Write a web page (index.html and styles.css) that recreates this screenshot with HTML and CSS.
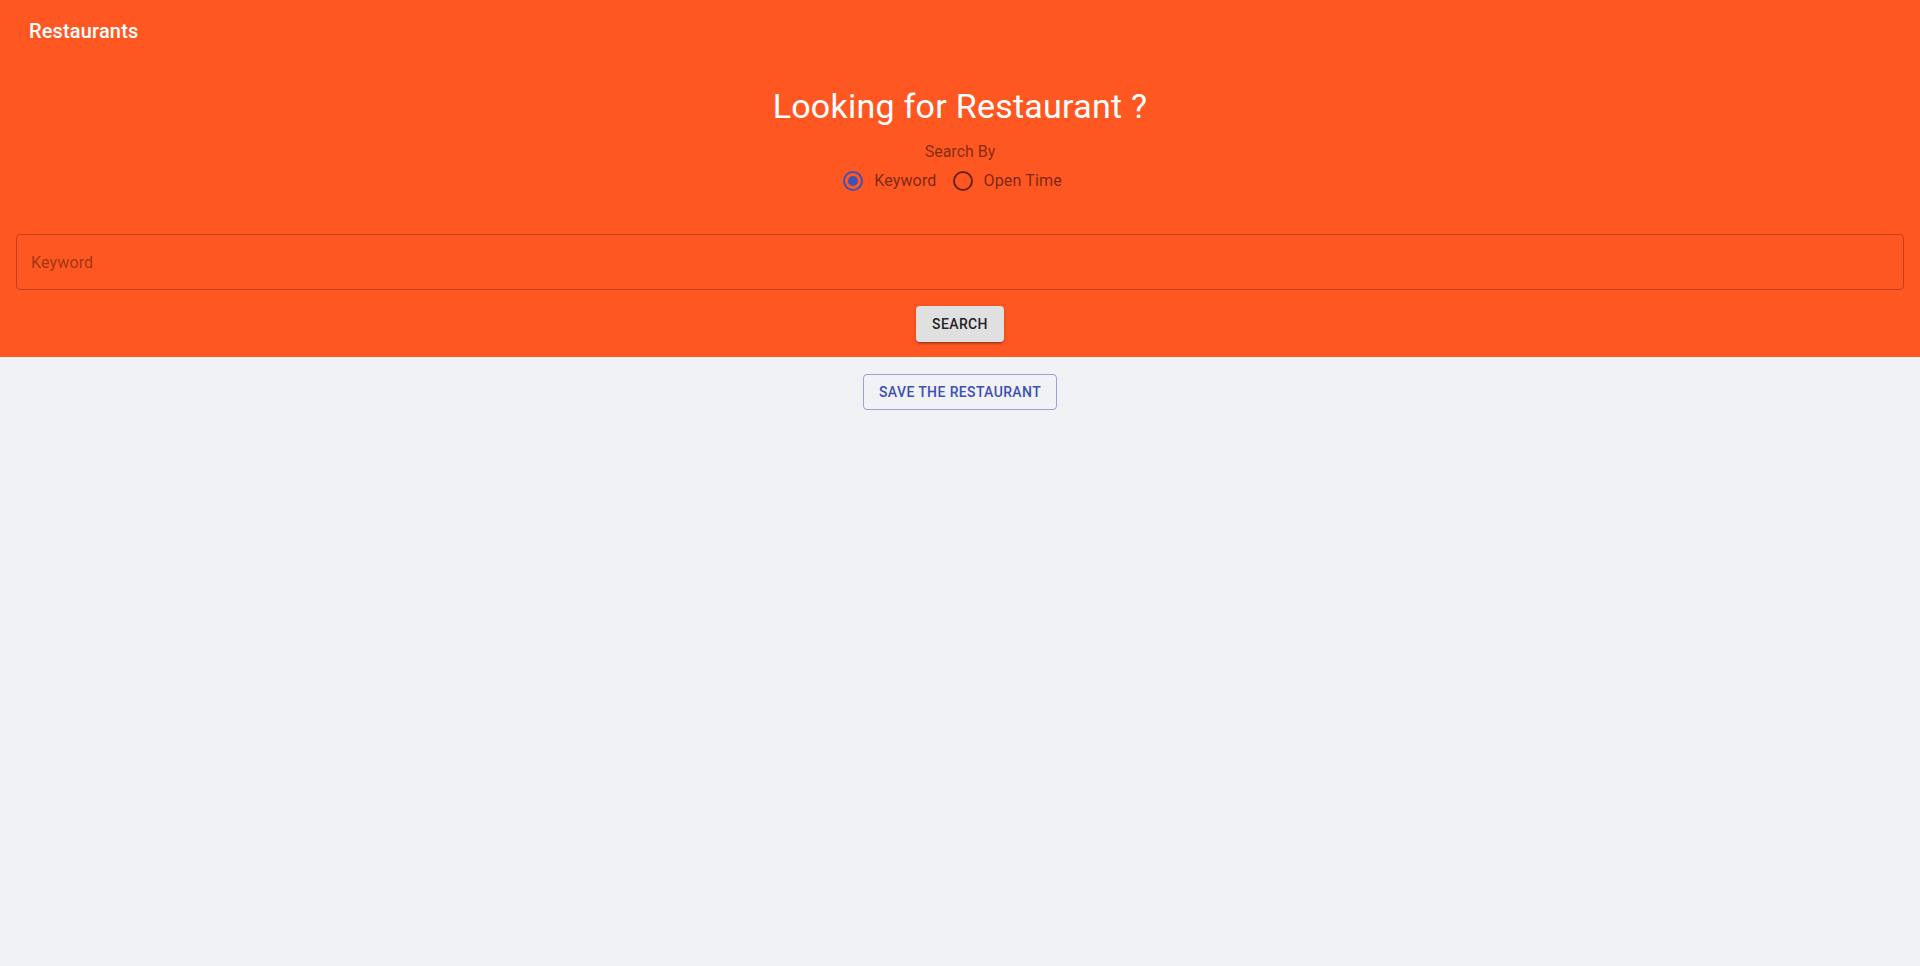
FILE: index.html
```html
<!DOCTYPE html>
<html lang="en">
<head>
<meta charset="utf-8">
<title>Restaurants</title>
<link rel="stylesheet" href="styles.css">
</head>
<body>
<header class="hero">
  <div class="toolbar"><span class="brand">Restaurants</span></div>
  <div class="search-area">
    <h1 class="headline">Looking for Restaurant ?</h1>
    <div class="search-by">Search By</div>
    <div class="radio-group">
      <label class="radio-option">
        <span class="radio checked"><span class="dot"></span></span>
        <span class="radio-label">Keyword</span>
      </label>
      <label class="radio-option">
        <span class="radio"></span>
        <span class="radio-label">Open Time</span>
      </label>
    </div>
  </div>
  <div class="field-wrap">
    <div class="field"><span class="placeholder">Keyword</span></div>
  </div>
  <div class="btn-row">
    <button class="btn-contained">SEARCH</button>
  </div>
</header>
<main class="content">
  <button class="btn-outlined">SAVE THE RESTAURANT</button>
</main>
</body>
</html>
```
FILE: styles.css
```css
* { box-sizing: border-box; }
html, body { margin: 0; padding: 0; }
body {
  background: #f0f2f5;
  font-family: Roboto, "Noto Sans", "Liberation Sans", sans-serif;
  min-height: 966px;
}
.hero {
  background: #ff5722;
  padding-bottom: 15px;
}
.toolbar {
  height: 64px;
  display: flex;
  align-items: center;
  padding: 0 29px;
}
.brand {
  color: #fff;
  font-size: 20px;
  font-weight: 500;
  letter-spacing: 0.15px;
  position: relative;
  top: -1px;
}
.search-area {
  display: flex;
  flex-direction: column;
  align-items: center;
}
.headline {
  margin: 21px 0 0;
  font-size: 34px;
  font-weight: 400;
  line-height: 42px;
  color: #fff;
  letter-spacing: 0.25px;
}
.search-by {
  margin-top: 17px;
  font-size: 16px;
  line-height: 16px;
  color: rgba(0, 0, 0, 0.5);
}
.radio-group {
  display: flex;
  margin-top: 0;
  margin-left: 1px;
}
.radio-option {
  display: flex;
  align-items: center;
  height: 42px;
  margin-right: 16px;
  margin-left: -11px;
}
.radio {
  width: 42px;
  height: 42px;
  display: flex;
  align-items: center;
  justify-content: center;
  position: relative;
}
.radio::before {
  content: "";
  width: 20px;
  height: 20px;
  border-radius: 50%;
  border: 2px solid rgba(0, 0, 0, 0.6);
  box-sizing: border-box;
}
.radio.checked::before { border-color: #3f51b5; }
.radio .dot {
  position: absolute;
  width: 10px;
  height: 10px;
  border-radius: 50%;
  background: #3f51b5;
  left: 16px;
  top: 16px;
}
.radio-label {
  font-size: 16px;
  line-height: 24px;
  color: rgba(0, 0, 0, 0.55);
  letter-spacing: 0.15px;
}
.field-wrap {
  padding: 32px 16px 0;
}
.field {
  height: 56px;
  border: 1px solid rgba(0, 0, 0, 0.23);
  border-radius: 4px;
  display: flex;
  align-items: center;
  padding: 0 14px;
}
.placeholder {
  font-size: 16px;
  color: rgba(0, 0, 0, 0.4);
  letter-spacing: 0.15px;
}
.btn-row {
  display: flex;
  justify-content: center;
  padding-top: 16px;
}
.btn-contained {
  width: 88px;
  height: 36px;
  border: none;
  border-radius: 4px;
  background: #e0e0e0;
  color: rgba(0, 0, 0, 0.87);
  font-family: "Roboto Medium", Roboto, sans-serif;
  font-size: 14px;
  font-weight: 500;
  letter-spacing: 0.4px;
  box-shadow: 0 3px 1px -2px rgba(0,0,0,0.2), 0 2px 2px 0 rgba(0,0,0,0.14), 0 1px 5px 0 rgba(0,0,0,0.12);
}
.content {
  display: flex;
  justify-content: center;
  padding-top: 17px;
}
.btn-outlined {
  height: 36px;
  padding: 0 15px;
  background: transparent;
  border: 1px solid rgba(63, 81, 181, 0.5);
  border-radius: 4px;
  color: #3f51b5;
  font-family: "Roboto Medium", Roboto, sans-serif;
  font-size: 14px;
  font-weight: 500;
  letter-spacing: 0.4px;
}
```
